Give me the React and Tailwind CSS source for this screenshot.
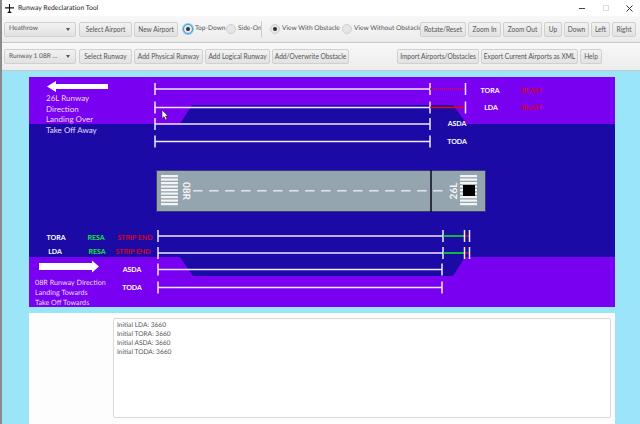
import React from "react";

const font = { fontFamily: 'Lato, sans-serif' };

function Btn({ w, children }) {
  return (
    <button
      className={`${w} h-[15px] shrink-0 rounded-[2px] border border-[#d0d0d0] bg-gradient-to-b from-[#f2f2f2] to-[#e2e2e2] text-center text-[6.6px] leading-[13px] whitespace-nowrap text-[#555]`}
    >
      {children}
    </button>
  );
}

function Combo({ label }) {
  return (
    <div className="flex h-[15px] w-[72px] shrink-0 items-center justify-between rounded-[2px] border border-[#d0d0d0] bg-gradient-to-b from-[#f2f2f2] to-[#e2e2e2] pr-[5px] pl-[4px] text-[6.6px] whitespace-nowrap text-[#555]">
      <span>{label}</span>
      <span className="h-0 w-0 border-x-[2.5px] border-t-[3px] border-x-transparent border-t-[#555]" />
    </div>
  );
}

function Radio({ on, focus, label, w }) {
  return (
    <div className={`${w} flex shrink-0 items-center gap-[2px] text-[6.6px] whitespace-nowrap text-[#555]`}>
      <span
        className={`flex h-[10px] w-[10px] shrink-0 items-center justify-center rounded-full border bg-[#e6e6e6] ${
          focus ? "border-[#3f9fd8] ring-1 ring-[#8cc8ea]" : "border-[#cfcfcf]"
        }`}
      >
        {on && <span className="h-[4px] w-[4px] rounded-full bg-[#333]" />}
      </span>
      {label}
    </div>
  );
}

function Tick({ x, y }) {
  return <line x1={x} x2={x} y1={y - 6} y2={y + 6} stroke="#f0e8ff" strokeWidth="1.5" />;
}

function Measure({ x1, x2, y }) {
  return (
    <g>
      <line x1={x1} x2={x2} y1={y} y2={y} stroke="#f0e8ff" strokeWidth="1.5" />
      <Tick x={x1} y={y} />
      <Tick x={x2} y={y} />
    </g>
  );
}

function Label({ x, y, fill = "#fff", size = 7, bold = true, anchor = "middle", children }) {
  return (
    <text
      x={x}
      y={y}
      fill={fill}
      fontSize={size}
      fontWeight={bold ? 700 : 400}
      textAnchor={anchor}
      dominantBaseline="central"
    >
      {children}
    </text>
  );
}

function Stripes({ x }) {
  const rows = [175, 178.5, 182, 185.5, 189, 192.5, 196, 199.5, 203];
  return rows.map((y) => <rect key={y} x={x} y={y} width="17" height="2.2" fill="#f4f4f4" />);
}

function Diagram() {
  const dashes = [];
  for (let x = 193; x < 442; x += 16) dashes.push(x);
  return (
    <svg viewBox="29 77 586 230" className="block h-[230px] w-[586px]" style={font}>
      <rect x="29" y="77" width="586" height="230" fill="#1c0aa6" />
      <rect x="29" y="77" width="586" height="47" fill="#7a00f2" />
      <rect x="29" y="257" width="586" height="50" fill="#7a00f2" />
      <polygon points="180,124 192,105 453,105 467,124" fill="#1c0aa6" />
      <polygon points="180,257 193,276 453,276 465,257" fill="#1c0aa6" />

      <polygon points="47,86.5 56,81 56,84 108,84 108,89 56,89 56,92" fill="#fff" />
      <Label x={46} y={98} fill="#e6dcff" size={8} bold={false} anchor="start">26L Runway</Label>
      <Label x={46} y={108.5} fill="#e6dcff" size={8} bold={false} anchor="start">Direction</Label>
      <Label x={46} y={119} fill="#e6dcff" size={8} bold={false} anchor="start">Landing Over</Label>
      <Label x={46} y={130} fill="#e6dcff" size={8} bold={false} anchor="start">Take Off Away</Label>

      <Measure x1={155} x2={430} y={89} />
      <line x1={430} x2={465} y1={89} y2={89} stroke="#e0102a" strokeWidth="1.5" strokeDasharray="1 1" />
      <Tick x={465.5} y={89} />
      <Measure x1={155} x2={430} y={107.5} />
      <line x1={430} x2={465} y1={107.5} y2={107.5} stroke="#f00010" strokeWidth="1.5" />
      <Tick x={465.5} y={107.5} />
      <Measure x1={155} x2={430} y={124} />
      <Measure x1={155} x2={430} y={141.5} />

      <Label x={490} y={90.5}>TORA</Label>
      <Label x={532} y={90.5} fill="#d4002a">BLAST</Label>
      <Label x={491} y={108}>LDA</Label>
      <Label x={532} y={108} fill="#d4002a">BLAST</Label>
      <Label x={457} y={124}>ASDA</Label>
      <Label x={457} y={142}>TODA</Label>

      <rect x="156.5" y="170.5" width="329" height="41" fill="#94a5b0" stroke="#3a3a78" />
      <Stripes x={161} />
      <Stripes x={460} />
      {dashes.map((x) => (
        <rect key={x} x={x} y="190.2" width="9.5" height="1.2" fill="#f4f4f4" />
      ))}
      <text x="186" y="191" fill="#f4f4f4" fontSize="10" fontWeight="700" textAnchor="middle" dominantBaseline="central" transform="rotate(90 186 191)">08R</text>
      <text x="454" y="191" fill="#f4f4f4" fontSize="10" fontWeight="700" textAnchor="middle" dominantBaseline="central" transform="rotate(-90 454 191)">26L</text>
      <line x1="431" x2="431" y1="170" y2="212" stroke="#0a0a20" strokeWidth="1.5" />
      <rect x="463" y="185" width="12" height="11" fill="#000" />

      <Label x={56} y={237.5}>TORA</Label>
      <Label x={96} y={237.5} fill="#18e838">RESA</Label>
      <Label x={135} y={237.5} fill="#d4002a">STRIP END</Label>
      <Label x={55} y={252}>LDA</Label>
      <Label x={97} y={252} fill="#18e838">RESA</Label>
      <Label x={133} y={252} fill="#d4002a">STRIP END</Label>
      <Label x={132} y={270}>ASDA</Label>
      <Label x={132} y={288}>TODA</Label>

      <Measure x1={158} x2={443} y={236} />
      <line x1={443} x2={464} y1={236} y2={236} stroke="#10f020" strokeWidth="1.5" />
      <line x1={464} x2={469} y1={236} y2={236} stroke="#f00010" strokeWidth="1.5" />
      <Tick x={464.5} y={236} />
      <Tick x={469.5} y={236} />
      <Measure x1={158} x2={443} y={253} />
      <line x1={443} x2={464} y1={253} y2={253} stroke="#10f020" strokeWidth="1.5" />
      <line x1={464} x2={469} y1={253} y2={253} stroke="#f00010" strokeWidth="1.5" />
      <Tick x={464.5} y={253} />
      <Tick x={469.5} y={253} />
      <Measure x1={158} x2={442} y={269.5} />
      <Measure x1={158} x2={442} y={287.5} />

      <polygon points="39,263 92,263 92,260.5 99,266.5 92,272.5 92,270 39,270" fill="#fff" />
      <Label x={35} y={282} fill="#e6dcff" size={7.2} bold={false} anchor="start">08R Runway Direction</Label>
      <Label x={35} y={292} fill="#e6dcff" size={7.2} bold={false} anchor="start">Landing Towards</Label>
      <Label x={35} y={302} fill="#e6dcff" size={7.2} bold={false} anchor="start">Take Off Towards</Label>

      {/* mouse pointer */}
      <polygon points="162,110 162,118.5 164,116.6 165.5,120 167,119.3 165.6,116 168,116" fill="#fff" stroke="#222" strokeWidth="0.6" />
    </svg>
  );
}

export default function App() {
  return (
    <div className="flex h-[424px] w-[640px] flex-col overflow-hidden border-l-2 border-[#8a8a8a] bg-[#9ae6f8] [text-rendering:geometricPrecision]" style={font}>
      <div className="flex h-[16px] shrink-0 items-center bg-white pl-[3px] text-[6.8px] text-[#222]">
        <svg viewBox="0 0 10 10" className="mr-[3px] h-[9px] w-[9px]">
          <path d="M4.4 0h1.2v3.6H10v1.5H5.6V8l1.6 1.2v.8H2.8v-.8L4.4 8V5.1H0V3.6h4.4z" fill="#111" />
        </svg>
        <span className="ml-[1px]">Runway Redeclaration Tool</span>
        <div className="ml-auto flex items-center">
          <span className="mr-[18px] h-px w-[6px] bg-[#444]" />
          <span className="mr-[17px] h-[6px] w-[6px] border border-[#ddd]" />
          <svg viewBox="0 0 7 7" className="mr-[7px] h-[7px] w-[7px]">
            <path d="M.5.5l6 6M6.5.5l-6 6" stroke="#333" fill="none" />
          </svg>
        </div>
      </div>

      <div className="flex h-[27px] shrink-0 items-center border-b border-[#c6c6c6] bg-gradient-to-b from-[#f8f8f8] to-[#ececec] pl-[2px]">
        <Combo label="Heathrow" />
        <div className="ml-[3px] flex items-center gap-[2px]">
          <Btn w="w-[53px]">Select Airport</Btn>
          <Btn w="w-[44px]">New Airport</Btn>
        </div>
        <div className="ml-[5px] flex items-center">
          <Radio on focus label="Top-Down" w="w-[43px]" />
          <Radio label="Side-On" w="w-[35px]" />
        </div>
        <span className="h-[16px] w-px bg-[#ccc]" />
        <div className="ml-[8px] flex items-center">
          <Radio on label="View With Obstacle" w="w-[72px]" />
          <Radio label="View Without Obstacle" w="w-[78px]" />
        </div>
        <div className="flex items-center gap-[2px]">
          <Btn w="w-[46px]">Rotate/Reset</Btn>
          <Btn w="w-[33px]">Zoom In</Btn>
          <Btn w="w-[39px]">Zoom Out</Btn>
          <Btn w="w-[18px]">Up</Btn>
          <Btn w="w-[25px]">Down</Btn>
          <Btn w="w-[19px]">Left</Btn>
          <Btn w="w-[24px]">Right</Btn>
        </div>
      </div>

      <div className="flex h-[28px] shrink-0 items-center border-b border-[#c6c6c6] bg-gradient-to-b from-[#f8f8f8] to-[#ececec] pl-[2px]">
        <Combo label="Runway 1 08R ..." />
        <div className="ml-[3px] flex items-center gap-[2px]">
          <Btn w="w-[53px]">Select Runway</Btn>
          <Btn w="w-[69px]">Add Physical Runway</Btn>
          <Btn w="w-[65px]">Add Logical Runway</Btn>
          <Btn w="w-[77px]">Add/Overwrite Obstacle</Btn>
        </div>
        <div className="ml-[48px] flex items-center gap-[2px]">
          <Btn w="w-[82px]">Import Airports/Obstacles</Btn>
          <Btn w="w-[97px]">Export Current Airports as XML</Btn>
          <Btn w="w-[22px]">Help</Btn>
        </div>
      </div>

      <div className="ml-[27px] mt-[6px] w-[586px] shrink-0">
        <Diagram />
      </div>

      <div className="ml-[27px] mt-[6px] flex w-[586px] flex-1 justify-end bg-[#fdfdfd] pt-[5px] pr-[4px] pb-[6px]">
        <div className="w-[498px] rounded-[2px] border border-[#d8d8d8] bg-white px-[3px] pt-[2px] text-[6.6px] leading-[9px] text-[#555]">
          <div>Initial LDA: 3660</div>
          <div>Initial TORA: 3660</div>
          <div>Initial ASDA: 3660</div>
          <div>Initial TODA: 3660</div>
        </div>
      </div>
    </div>
  );
}
